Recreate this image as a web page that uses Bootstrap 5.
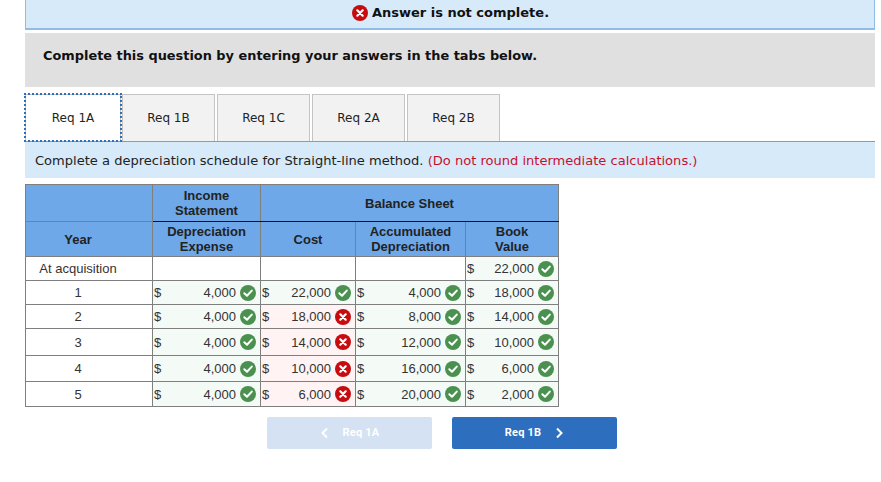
<!DOCTYPE html>
<html lang="en">
<head>
<meta charset="utf-8">
<title>Answer</title>
<link rel="stylesheet" href="https://cdn.jsdelivr.net/npm/bootstrap@5.3.0/dist/css/bootstrap.min.css">
<style>
body{background:#fff;color:#000;font-family:"DejaVu Sans",Verdana,sans-serif;font-size:13px;padding:0 6px 0 25px;margin:0;overflow:hidden}
.ans-banner{height:30px;background:#d6eafa;border:solid #8fbce8;border-width:0 1px 2px 1px;font-weight:700;font-size:13px;color:#111;padding-bottom:2px;padding-left:1px}
.ans-gray{height:54px;margin-top:3px;background:#e0e0e0;padding-left:18px;font-weight:700;font-size:12.9px;color:#111;padding-bottom:9px}
.ans-tabs{margin-top:7px;height:48px;border-bottom:1px solid #999;gap:2px;flex-wrap:nowrap;padding-left:1px}
.ans-tabs .nav-link{width:93px;height:47px;margin:0;border:1px solid #c4c4c4;border-bottom:0;border-radius:0;background:#f2f2f2;color:#222;font-size:12px;padding:0;display:flex;align-items:center;justify-content:center}
.ans-tabs .nav-item:first-child{margin-right:-1px}
.ans-tabs .nav-link.active{width:96px;margin-left:-1px;background:#fff;color:#222;outline:2px dotted #2d6fbe;outline-offset:-1px;border-color:#c4c4c4}
.ans-strip{height:36px;background:#d6eafa;padding-left:10px;font-size:13.06px;color:#222;padding-top:1px}
.ans-red{color:#c8102e}
.ans-wrap{margin-top:6px;width:533px}
.ans-table{font-family:"Liberation Sans",Arial,sans-serif;font-size:13px;color:#333;table-layout:fixed;width:533px;margin:0;border-collapse:collapse;--bs-table-bg:transparent}
.ans-table th,.ans-table td{border:1px solid #7f7f7f;padding:0;vertical-align:middle;line-height:15px;text-align:center}
.ans-table th{background:#6ea8e9;color:#222;font-weight:700}
.ans-table tr.hd-top th{height:37px}
.ans-table tr.hd-sub th{height:35px;border-top:1px solid #111}
.ans-table tr.hd-top th.merged{border-bottom:1px solid #111}
.ans-table th.first-col,.ans-table td.first-col{padding-right:22px}
.ans-table td{height:24px}
.ans-table tr.t27 td{height:27px}
.ans-table tr.t26 td{height:26px}
.ans-table tr.t25 td{height:25px}
.ans-table td.val{background:#f4faf6}
.ans-table td.bad{background:#fff3f3}
.ans-cell{padding:0 4px 0 1px;height:100%}
.ans-cell b{font-weight:400;margin-left:auto;margin-right:4px}
.ans-ic{width:16px;height:16px;flex:none;display:block}
.ans-nav{margin-top:10px;padding-left:242px;gap:20px}
.ans-btn{width:165px;height:32px;padding:0;border-radius:2px;border:0;font-family:Roboto,Inter,sans-serif;font-weight:700;font-size:11px;letter-spacing:.2px;color:#fff;gap:14px}
.ans-btn.btn-primary{background:#2d6fbe}
.ans-btn.btn-primary:disabled{background:#d5e2f3;color:#fff;opacity:1}
.ans-btn svg{width:9px;height:12px;display:block}
</style>
</head>
<body>
<svg width="0" height="0" class="position-absolute">
<defs>
<symbol id="ok" viewBox="0 0 16 16"><circle cx="8" cy="8" r="8" fill="#4a9150"/><path d="M4.3 8.3 7 10.8 11.8 5.6" fill="none" stroke="#fff" stroke-width="2" stroke-linecap="round" stroke-linejoin="round"/></symbol>
<symbol id="no" viewBox="0 0 16 16"><circle cx="8" cy="8" r="8" fill="#c70c10"/><path d="M5.3 5.3 10.7 10.7M10.7 5.3 5.3 10.7" fill="none" stroke="#fff" stroke-width="2.2" stroke-linecap="round"/></symbol>
</defs>
</svg>

<div class="ans-banner d-flex align-items-center justify-content-center gap-1">
<svg class="ans-ic"><use href="#no"/></svg><span>Answer is not complete.</span>
</div>
<div class="ans-gray d-flex align-items-center">Complete this question by entering your answers in the tabs below.</div>

<ul class="nav ans-tabs">
<li class="nav-item"><a class="nav-link active" href="#">Req 1A</a></li>
<li class="nav-item"><a class="nav-link" href="#">Req 1B</a></li>
<li class="nav-item"><a class="nav-link" href="#">Req 1C</a></li>
<li class="nav-item"><a class="nav-link" href="#">Req 2A</a></li>
<li class="nav-item"><a class="nav-link" href="#">Req 2B</a></li>
</ul>
<div class="ans-strip d-flex align-items-center"><span>Complete a depreciation schedule for Straight-line method. <span class="ans-red">(Do not round intermediate calculations.)</span></span></div>

<div class="ans-wrap">
<table class="table ans-table">
<colgroup><col style="width:127px"><col style="width:108px"><col style="width:95px"><col style="width:110px"><col style="width:93px"></colgroup>
<thead>
<tr class="hd-top"><th></th><th class="merged">Income<br>Statement</th><th colspan="3" class="merged">Balance Sheet</th></tr>
<tr class="hd-sub"><th class="first-col">Year</th><th>Depreciation<br>Expense</th><th>Cost</th><th>Accumulated<br>Depreciation</th><th>Book<br>Value</th></tr>
</thead>
<tbody>
<tr><td class="first-col">At acquisition</td><td></td><td></td><td></td><td class="val"><div class="ans-cell d-flex align-items-center">$<b>22,000</b><svg class="ans-ic"><use href="#ok"/></svg></div></td></tr>
<tr><td class="first-col">1</td><td class="val"><div class="ans-cell d-flex align-items-center">$<b>4,000</b><svg class="ans-ic"><use href="#ok"/></svg></div></td><td class="val"><div class="ans-cell d-flex align-items-center">$<b>22,000</b><svg class="ans-ic"><use href="#ok"/></svg></div></td><td class="val"><div class="ans-cell d-flex align-items-center">$<b>4,000</b><svg class="ans-ic"><use href="#ok"/></svg></div></td><td class="val"><div class="ans-cell d-flex align-items-center">$<b>18,000</b><svg class="ans-ic"><use href="#ok"/></svg></div></td></tr>
<tr><td class="first-col">2</td><td class="val"><div class="ans-cell d-flex align-items-center">$<b>4,000</b><svg class="ans-ic"><use href="#ok"/></svg></div></td><td class="bad"><div class="ans-cell d-flex align-items-center">$<b>18,000</b><svg class="ans-ic"><use href="#no"/></svg></div></td><td class="val"><div class="ans-cell d-flex align-items-center">$<b>8,000</b><svg class="ans-ic"><use href="#ok"/></svg></div></td><td class="val"><div class="ans-cell d-flex align-items-center">$<b>14,000</b><svg class="ans-ic"><use href="#ok"/></svg></div></td></tr>
<tr class="t27"><td class="first-col">3</td><td class="val"><div class="ans-cell d-flex align-items-center">$<b>4,000</b><svg class="ans-ic"><use href="#ok"/></svg></div></td><td class="bad"><div class="ans-cell d-flex align-items-center">$<b>14,000</b><svg class="ans-ic"><use href="#no"/></svg></div></td><td class="val"><div class="ans-cell d-flex align-items-center">$<b>12,000</b><svg class="ans-ic"><use href="#ok"/></svg></div></td><td class="val"><div class="ans-cell d-flex align-items-center">$<b>10,000</b><svg class="ans-ic"><use href="#ok"/></svg></div></td></tr>
<tr class="t26"><td class="first-col">4</td><td class="val"><div class="ans-cell d-flex align-items-center">$<b>4,000</b><svg class="ans-ic"><use href="#ok"/></svg></div></td><td class="bad"><div class="ans-cell d-flex align-items-center">$<b>10,000</b><svg class="ans-ic"><use href="#no"/></svg></div></td><td class="val"><div class="ans-cell d-flex align-items-center">$<b>16,000</b><svg class="ans-ic"><use href="#ok"/></svg></div></td><td class="val"><div class="ans-cell d-flex align-items-center">$<b>6,000</b><svg class="ans-ic"><use href="#ok"/></svg></div></td></tr>
<tr class="t25"><td class="first-col">5</td><td class="val"><div class="ans-cell d-flex align-items-center">$<b>4,000</b><svg class="ans-ic"><use href="#ok"/></svg></div></td><td class="bad"><div class="ans-cell d-flex align-items-center">$<b>6,000</b><svg class="ans-ic"><use href="#no"/></svg></div></td><td class="val"><div class="ans-cell d-flex align-items-center">$<b>20,000</b><svg class="ans-ic"><use href="#ok"/></svg></div></td><td class="val"><div class="ans-cell d-flex align-items-center">$<b>2,000</b><svg class="ans-ic"><use href="#ok"/></svg></div></td></tr>
</tbody>
</table>
</div>

<div class="ans-nav d-flex">
<button class="btn btn-primary ans-btn d-flex align-items-center justify-content-center" disabled><svg viewBox="0 0 9 12"><path d="M7 1.500 2.500 6 7 10.500" fill="none" stroke="#fff" stroke-width="2"/></svg><span>Req 1A</span></button>
<button class="btn btn-primary ans-btn d-flex align-items-center justify-content-center"><span>Req 1B</span><svg viewBox="0 0 9 12"><path d="M2 1.500 6.500 6 2 10.500" fill="none" stroke="#fff" stroke-width="2"/></svg></button>
</div>
<script src="https://cdn.jsdelivr.net/npm/bootstrap@5.3.0/dist/js/bootstrap.bundle.min.js"></script>
</body>
</html>
